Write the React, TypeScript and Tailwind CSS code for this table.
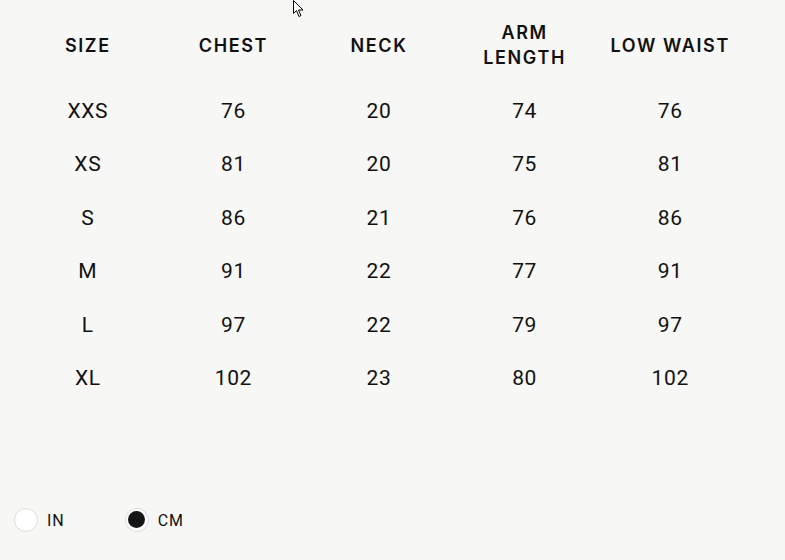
import { useState } from "react";

const headers = ["SIZE", "CHEST", "NECK", "ARM\nLENGTH", "LOW WAIST"];

const rowsCm = [
  ["XXS", "76", "20", "74", "76"],
  ["XS", "81", "20", "75", "81"],
  ["S", "86", "21", "76", "86"],
  ["M", "91", "22", "77", "91"],
  ["L", "97", "22", "79", "97"],
  ["XL", "102", "23", "80", "102"],
];

export default function App() {
  const [unit, setUnit] = useState<"in" | "cm">("cm");

  return (
    <div className="relative w-[785px] h-[560px] bg-[#f7f7f5] text-[#111] overflow-hidden">
      {/* mouse pointer */}
      <svg
        className="absolute left-[293px] top-0"
        width="12"
        height="18"
        viewBox="0 0 12 18"
      >
        <path
          d="M0.5 0.5 L0.5 13.5 L3.5 10.5 L6 16.5 L8 15.5 L5.5 10 L10 10 Z"
          fill="#fff"
          stroke="#000"
          strokeWidth="1"
        />
      </svg>

      <div className="ml-[15px] w-[728px] pt-[20px]">
        <div className="grid grid-cols-5 h-[50px] items-center font-['Inter',sans-serif] font-semibold text-[18px] leading-[25px] tracking-[0.09em] text-center">
          {headers.map((h) => (
            <div key={h} className="whitespace-pre-line">
              {h}
            </div>
          ))}
        </div>

        <div className="mt-[15px] font-['Roboto',sans-serif] text-[21px] tracking-[0.03em] text-center">
          {rowsCm.map((row) => (
            <div key={row[0]} className="grid grid-cols-5 h-[53.4px] items-center">
              {row.map((cell, i) => (
                <div key={i}>{cell}</div>
              ))}
            </div>
          ))}
        </div>
      </div>

      <div className="absolute left-[14px] top-[506px] flex items-center font-['Roboto',sans-serif] text-[16px] tracking-[0.06em]">
        <button
          onClick={() => setUnit("in")}
          className="flex items-center gap-[9px]"
        >
          <span className="size-6 rounded-full border border-[#dcdcdc] bg-white flex items-center justify-center">
            {unit === "in" && <span className="size-[17px] rounded-full bg-[#151515]" />}
          </span>
          <span className="pt-[3px]">IN</span>
        </button>
        <button
          onClick={() => setUnit("cm")}
          className="flex items-center gap-[9px] ml-[60px]"
        >
          <span className="size-6 rounded-full border border-[#dcdcdc] bg-white flex items-center justify-center">
            {unit === "cm" && <span className="size-[17px] rounded-full bg-[#151515]" />}
          </span>
          <span className="pt-[3px]">CM</span>
        </button>
      </div>
    </div>
  );
}
